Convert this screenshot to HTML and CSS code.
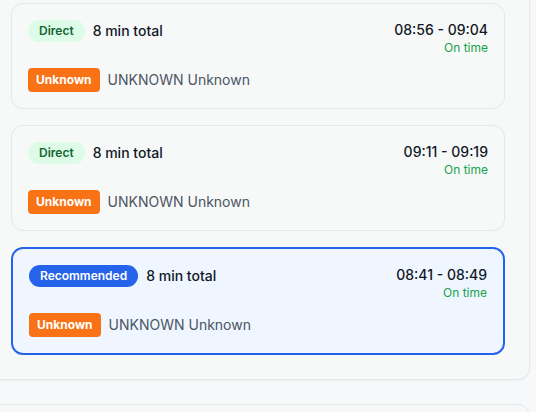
FILE: index.html
```html
<!DOCTYPE html>
<html>
<head>
<meta charset="utf-8">
<link rel="stylesheet" href="styles.css">
</head>
<body>
<div class="page">
  <section class="panel">
    <div class="card">
      <div class="top">
        <div class="left">
          <span class="pill pill-direct">Direct</span>
          <span class="total">8 min total</span>
        </div>
        <div class="right">
          <div class="time">08:56 - 09:04</div>
          <div class="status">On time</div>
        </div>
      </div>
      <div class="line">
        <span class="tag">Unknown</span>
        <span class="op">UNKNOWN Unknown</span>
      </div>
    </div>
    <div class="card">
      <div class="top">
        <div class="left">
          <span class="pill pill-direct">Direct</span>
          <span class="total">8 min total</span>
        </div>
        <div class="right">
          <div class="time">09:11 - 09:19</div>
          <div class="status">On time</div>
        </div>
      </div>
      <div class="line">
        <span class="tag">Unknown</span>
        <span class="op">UNKNOWN Unknown</span>
      </div>
    </div>
    <div class="card card-rec">
      <div class="top">
        <div class="left">
          <span class="pill pill-rec">Recommended</span>
          <span class="total">8 min total</span>
        </div>
        <div class="right">
          <div class="time">08:41 - 08:49</div>
          <div class="status">On time</div>
        </div>
      </div>
      <div class="line">
        <span class="tag">Unknown</span>
        <span class="op">UNKNOWN Unknown</span>
      </div>
    </div>
  </section>
  <section class="panel panel-next"></section>
</div>
</body>
</html>
```
FILE: styles.css
```css
html, body {
  margin: 0;
  padding: 0;
  background: #f7f8f9;
  font-family: Inter, "Noto Sans", sans-serif;
  color: #111827;
  overflow: hidden;
}
.page {
  margin-top: -22px;
  margin-left: -14px;
  width: 544px;
}
.panel {
  box-sizing: border-box;
  width: 544px;
  background: #f7f8f8;
  border: 1px solid #e5e7eb;
  border-radius: 12px;
  padding: 24px;
  display: flex;
  flex-direction: column;
  gap: 16px;
  box-shadow: 0 1px 2px rgba(0,0,0,0.04);
}
.panel-next {
  margin-top: 24px;
  height: 60px;
}
.card {
  background: #f7f8f8;
  border: 1px solid #e5e7eb;
  border-radius: 12px;
  padding: 16px;
  display: flex;
  flex-direction: column;
  gap: 12px;
}
.card-rec {
  background: #eff6ff;
  border: 2px solid #2563eb;
}
.top {
  display: flex;
  justify-content: space-between;
  align-items: flex-start;
}
.left {
  display: flex;
  align-items: center;
  gap: 8px;
}
.pill {
  font-size: 12px;
  line-height: 16px;
  font-weight: 600;
  padding: 3px 11px;
  border-radius: 999px;
}
.pill-direct {
  background: #dcfce7;
  color: #166534;
}
.pill-rec {
  background: #2563eb;
  color: #ffffff;
}
.total {
  font-size: 14px;
  line-height: 20px;
  font-weight: 500;
  color: #111827;
}
.right {
  text-align: right;
}
.time {
  font-size: 14px;
  line-height: 20px;
  font-weight: 500;
  color: #111827;
}
.status {
  font-size: 12px;
  line-height: 16px;
  color: #16a34a;
}
.line {
  display: flex;
  align-items: center;
  gap: 8px;
}
.tag {
  background: #f97316;
  color: #ffffff;
  font-size: 12px;
  line-height: 16px;
  font-weight: 700;
  padding: 4px 8px;
  border-radius: 4px;
}
.op {
  font-size: 14px;
  line-height: 20px;
  color: #4b5563;
}
```
